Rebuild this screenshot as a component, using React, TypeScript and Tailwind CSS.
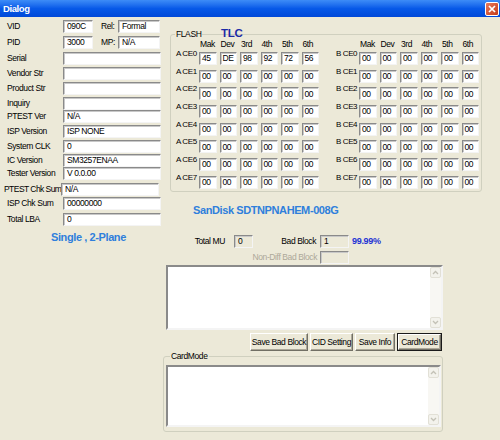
import React from 'react'

const small = 'text-[8.5px] tracking-[-0.4px]'

const edit =
  'bg-white border border-t-[#8a8a8a] border-l-[#8a8a8a] border-b-[#f4f4f4] border-r-[#f4f4f4] shadow-[inset_1px_1px_0_#c8c8c8] flex items-center pl-[3px] text-[8.5px] tracking-[-0.4px] leading-none text-black whitespace-nowrap overflow-hidden'

type Row = { label: string; value?: string; mt: string; lbl?: string; extra?: { label: string; value: string } }

const leftRows: Row[] = [
  { label: 'VID', value: '090C', mt: 'mt-[3px]', extra: { label: 'Rel:', value: 'Formal' } },
  { label: 'PID', value: '3000', mt: 'mt-[3px]', extra: { label: 'MP:', value: 'N/A' } },
  { label: 'Serial', mt: 'mt-[3px]' },
  { label: 'Vendor Str', mt: 'mt-[2px]' },
  { label: 'Product Str', mt: 'mt-[2px]' },
  { label: 'Inquiry', mt: 'mt-[2px]' },
  { label: 'PTEST Ver', value: 'N/A', mt: 'mt-0' },
  { label: 'ISP Version', value: 'ISP NONE', mt: 'mt-[2px]' },
  { label: 'System CLK', value: '0', mt: 'mt-[2px]' },
  { label: 'IC Version', value: 'SM3257ENAA', mt: 'mt-[1px]' },
  { label: 'Tester Version', value: 'V 0.0.00', mt: 'mt-0' },
  { label: 'PTEST Chk Sum', value: 'N/A', mt: 'mt-[3px]', lbl: '-ml-[2px] !pl-0 !tracking-[-0.55px]' },
  { label: 'ISP Chk Sum', value: '00000000', mt: 'mt-[1px]' },
  { label: 'Total LBA', value: '0', mt: 'mt-[3px]' },
]

const cols = ['Mak', 'Dev', '3rd', '4th', '5th', '6th']
const ce0 = ['45', 'DE', '98', '92', '72', '56']

function FlashSide({ side }: { side: 'A' | 'B' }) {
  return (
    <div>
      <div className={`flex gap-[3px] pl-[23px] h-[10px] ${small} leading-[10px]`}>
        {cols.map((c) => (
          <div key={c} className="w-[17.5px] pl-[1px]">
            {c}
          </div>
        ))}
      </div>
      <div className="mt-[3px] flex flex-col gap-[4.7px]">
        {[0, 1, 2, 3, 4, 5, 6, 7].map((i) => (
          <div key={i} className="flex items-start">
            <div className="w-[23px] text-[8px] tracking-[-0.4px] leading-[10px] -mt-[3px] whitespace-nowrap">
              {side} CE{i}
            </div>
            <div className="flex gap-[3px]">
              {cols.map((c, j) => (
                <div key={c} className={`${edit} w-[17.5px] h-[13px] !pl-[2px]`}>
                  {side === 'A' && i === 0 ? ce0[j] : '00'}
                </div>
              ))}
            </div>
          </div>
        ))}
      </div>
    </div>
  )
}

function ScrollBar() {
  const arrow = (up: boolean) => (
    <div className="w-[11px] h-[11px] bg-[#f3f2ec] border border-[#e2e0d6] rounded-[2px] flex items-center justify-center">
      <svg width="7" height="5" viewBox="0 0 7 5">
        <path d={up ? 'M1 4 L3.5 1.5 L6 4' : 'M1 1 L3.5 3.5 L6 1'} fill="none" stroke="#c3c1b6" strokeWidth="1.3" />
      </svg>
    </div>
  )
  return (
    <div className="w-[11px] h-full bg-[#f8f7f3] flex flex-col justify-between">
      {arrow(true)}
      {arrow(false)}
    </div>
  )
}

function TextArea({ className }: { className: string }) {
  return (
    <div
      className={`bg-white border-2 border-t-[#8a8a8a] border-l-[#8a8a8a] border-b-[#f4f4f4] border-r-[#f4f4f4] flex ${className}`}
    >
      <div className="flex-1" />
      <ScrollBar />
    </div>
  )
}

function Button({ label, isDefault, className }: { label: string; isDefault?: boolean; className: string }) {
  return (
    <div className={`${className} h-[18px] ${isDefault ? 'border border-[#1a1a1a]' : ''}`}>
      <div
        className={`h-full w-full bg-[#ece9d8] border border-t-white border-l-white border-b-[#716f64] border-r-[#716f64] shadow-[inset_-1px_-1px_0_#aca899] flex items-center justify-center ${small} leading-none whitespace-nowrap`}
      >
        {label}
      </div>
    </div>
  )
}

export default function App() {
  return (
    <div className="w-[500px] h-[440px] bg-[#ece9d8] overflow-hidden text-black font-['Liberation_Sans',Arial,sans-serif]">
      <div className="h-[17px] bg-gradient-to-b from-[#3d8cf7] via-[#0759e8] to-[#0048d8] flex items-center justify-between pl-[3px] pr-[1px]">
        <span className="text-white font-bold text-[9.5px] tracking-[-0.4px] leading-none">Dialog</span>
        <div className="w-[14px] h-[14px] rounded-[2px] border border-white bg-gradient-to-br from-[#e8785a] to-[#c43a15] flex items-center justify-center">
          <svg width="8" height="8" viewBox="0 0 8 8">
            <path d="M1 1 L7 7 M7 1 L1 7" stroke="white" strokeWidth="1.7" />
          </svg>
        </div>
      </div>

      <div className="flex">
        <div className="w-[163px] pl-[6px]">
          {leftRows.map((r) => (
            <div key={r.label} className={`${r.mt} flex items-center h-[13px]`}>
              <div className={`w-[57px] pl-[1px] ${small} leading-none whitespace-nowrap ${r.lbl ?? ''}`}>{r.label}</div>
              {r.extra ? (
                <>
                  <div className={`${edit} w-[30px] h-[13px]`}>{r.value}</div>
                  <div className={`w-[25px] pl-[8px] ${small} leading-none`}>{r.extra.label}</div>
                  <div className={`${edit} w-[42px] h-[13px]`}>{r.extra.value}</div>
                </>
              ) : (
                <div className={`${edit} w-[98px] h-[13px]`}>{r.value ?? ''}</div>
              )}
            </div>
          ))}
          <div className="mt-[5px] pl-[45px] text-[11px] tracking-[-0.4px] leading-[13px] font-bold text-[#2f7fdc]">
            Single , 2-Plane
          </div>
        </div>

        <div className="flex-1">
          <div className="relative mt-[17px] ml-[7px] w-[312px] h-[158px] border border-[#d0d0bf] rounded-[3px] pl-[5px] pt-[4px]">
            <span className={`absolute left-[4px] -top-[6px] bg-[#ece9d8] px-[1px] ${small} leading-[10px]`}>FLASH</span>
            <span className="absolute left-[50px] -top-[8px] text-[11.5px] tracking-[-0.3px] leading-[12px] font-bold text-[#1c2aa6]">
              TLC
            </span>
            <div className="flex gap-[17px]">
              <FlashSide side="A" />
              <FlashSide side="B" />
            </div>
          </div>

          <div className="mt-[11px] pl-[30px] text-[11px] tracking-[-0.4px] leading-[14px] font-bold text-[#2f7fdc]">
            SanDisk SDTNPNAHEM-008G
          </div>

          <div className="mt-[18px] flex items-center h-[13px]">
            <div className={`w-[71px] pr-[9px] text-right ${small} leading-none`}>Total MU</div>
            <div className={`${edit} w-[19px] h-[13px] !bg-[#ece9d8]`}>0</div>
            <div className={`w-[67px] pr-[4px] text-right ${small} leading-none`}>Bad Block</div>
            <div className={`${edit} w-[29px] h-[13px] !bg-[#ece9d8]`}>1</div>
            <div className="ml-[3px] text-[9px] tracking-[-0.3px] leading-none font-bold text-[#2433d4]">99.99%</div>
          </div>
          <div className="mt-[3px] flex items-center h-[13px]">
            <div className={`w-[157px] pr-[3px] text-right ${small} leading-none text-[#aca899]`}>Non-Diff Bad Block</div>
            <div className={`${edit} w-[29px] h-[13px] !bg-[#ece9d8]`} />
          </div>

          <TextArea className="mt-[1px] ml-[3px] w-[277px] h-[65px]" />

          <div className="mt-[3px] ml-[87px] flex gap-[2px]">
            <Button label="Save Bad Block" className="w-[58px]" />
            <Button label="CID Setting" className="w-[43px]" />
            <Button label="Save Info" className="w-[40px]" />
            <Button label="CardMode" isDefault className="w-[45px]" />
          </div>

          <div className="relative mt-[5px] w-[280px] h-[76px] border border-[#d0d0bf] rounded-[3px] pt-[8px] pl-[2px]">
            <span className={`absolute left-[6px] -top-[6px] bg-[#ece9d8] px-[1px] ${small} leading-[10px]`}>CardMode</span>
            <TextArea className="w-[275px] h-[62px]" />
          </div>
        </div>
      </div>
    </div>
  )
}
